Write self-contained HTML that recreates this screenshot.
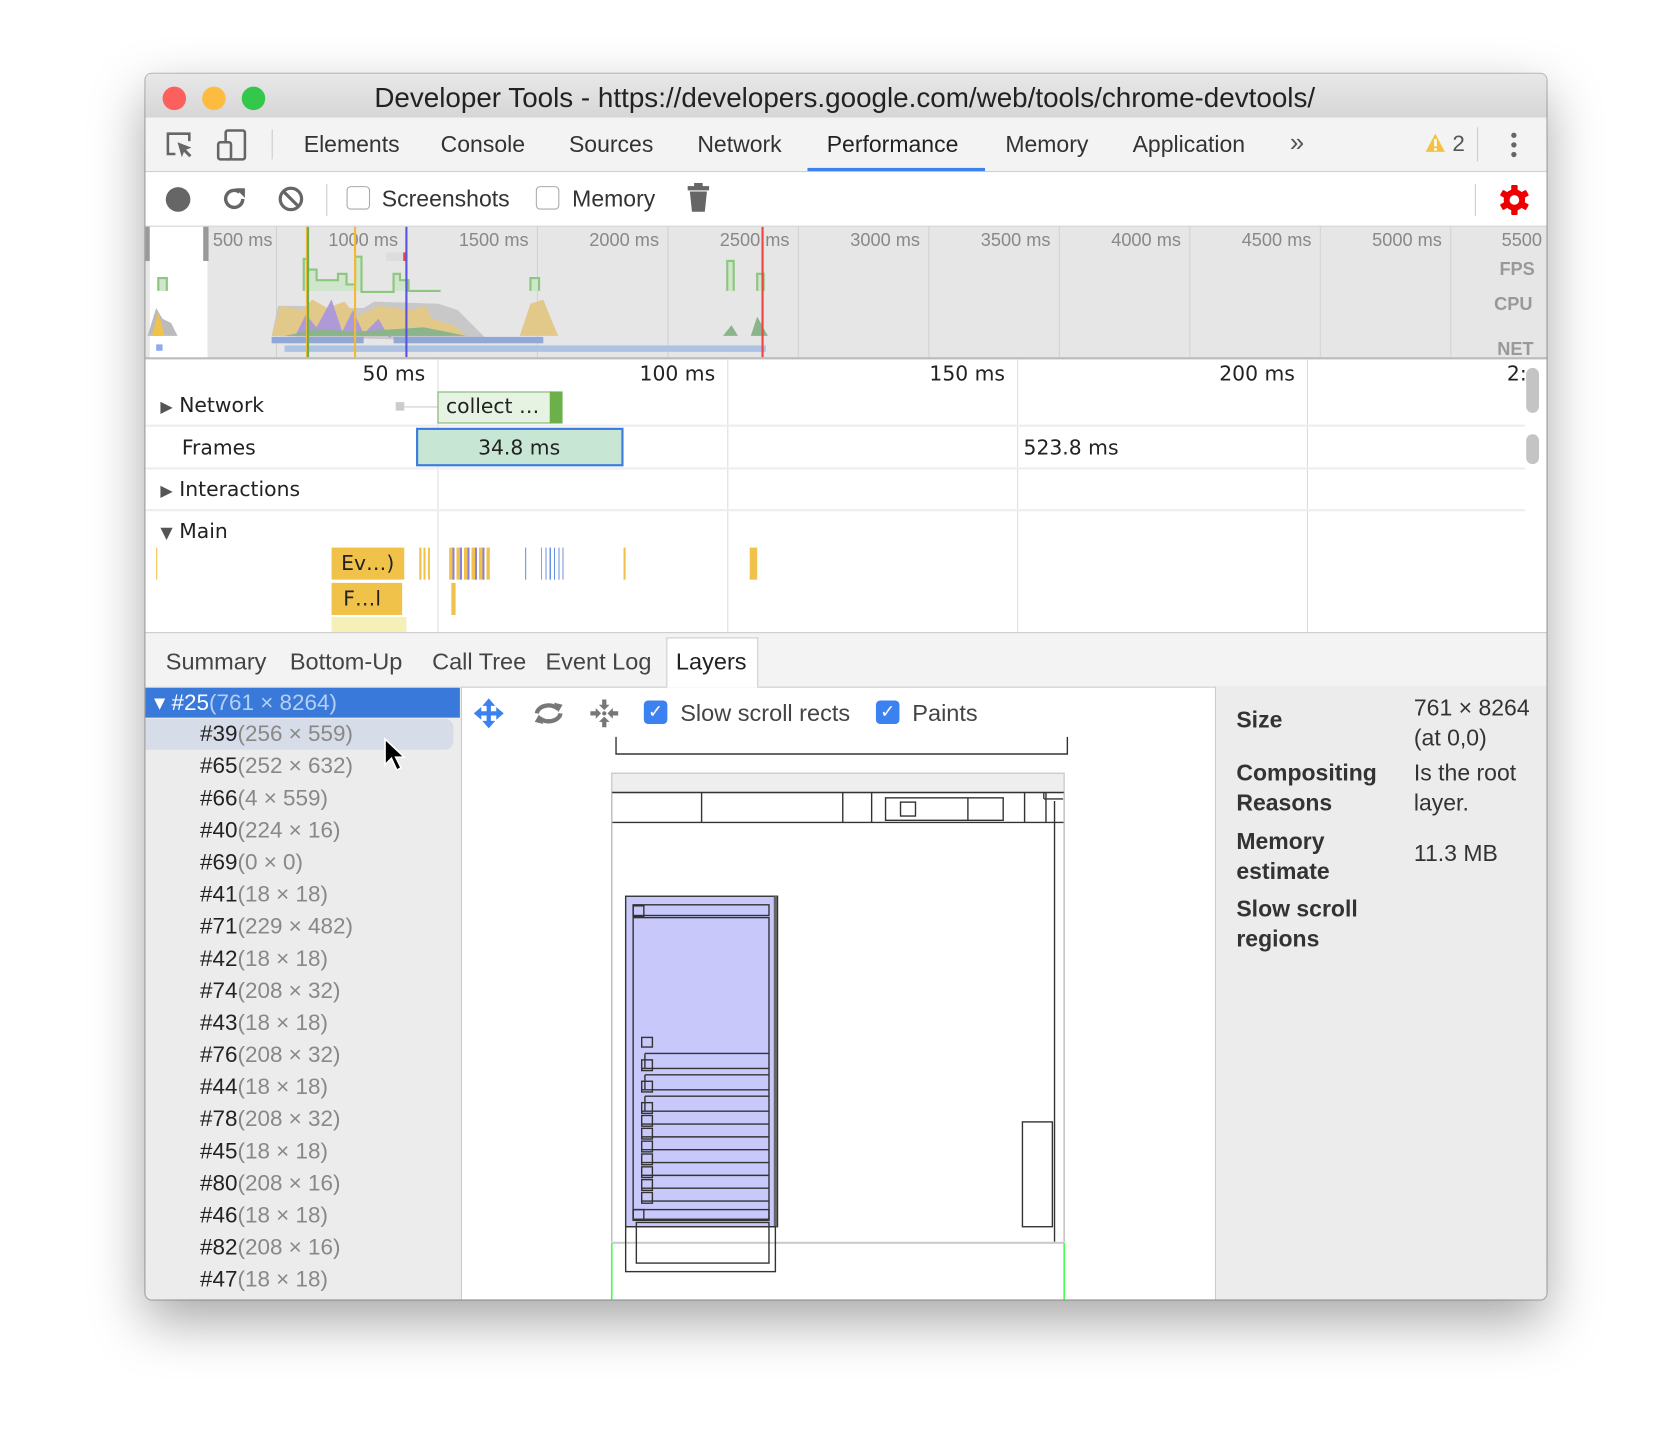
<!DOCTYPE html>
<html><head><meta charset="utf-8"><style>
html,body{margin:0;padding:0;background:#fff;width:1677px;height:1444px;overflow:hidden}
#s{position:absolute;left:0;top:0;width:1568px;height:1350px;transform:scale(1.0695);transform-origin:0 0;font-family:"Liberation Sans",Arial,sans-serif;color:#333}
.a{position:absolute}
.t{position:absolute;font-size:21px;color:#333;white-space:nowrap}
.g{color:#888}
.cb{position:absolute;width:20px;height:20px;border:1px solid #aaa;border-radius:4px;background:#fff}
.cbc{position:absolute;width:22px;height:22px;border-radius:4px;background:#3b82f0;color:#fff;font-size:17px;text-align:center;line-height:22px}
.ov{position:absolute;font-size:17px;color:#888}
.vl{position:absolute;width:1px;background:#ddd}
.row{position:absolute;left:187px;font-size:21px;color:#222}
</style></head><body><div id="s">
<div class="a" style="left:136px;top:69px;width:1310px;height:1146px;background:#fff;border-radius:6px;box-shadow:0 20px 50px rgba(0,0,0,.35),0 0 0 1px #b8b8b8;overflow:hidden">
<div class="a" style="left:0;top:0;width:1310px;height:41px;background:linear-gradient(#e8e8e8,#d6d6d6)"></div>
<div class="a" style="left:16px;top:12px;width:22px;height:22px;border-radius:50%;background:#fc605c"></div>
<div class="a" style="left:53px;top:12px;width:22px;height:22px;border-radius:50%;background:#fdbc40"></div>
<div class="a" style="left:90px;top:12px;width:22px;height:22px;border-radius:50%;background:#34c84a"></div>
<div class="t" style="left:214px;top:7px;font-size:26px;color:#222">Developer Tools - https://developers.google.com/web/tools/chrome-devtools/</div>
<div class="a" style="left:0;top:41px;width:1310px;height:50px;background:#f3f3f3;border-bottom:1px solid #ccc"></div>
<svg class="a" style="left:18px;top:53px" width="28" height="28" viewBox="0 0 28 28"><path d="M10 22H3V3h20v7" fill="none" stroke="#666" stroke-width="2.4"/><path d="M12 11l13 5-5 2 5 5-2 2-5-5-2 5z" fill="#666"/></svg>
<svg class="a" style="left:66px;top:51px" width="30" height="32" viewBox="0 0 30 32"><rect x="9" y="2" width="18" height="27" rx="2" fill="none" stroke="#666" stroke-width="2.4"/><rect x="2" y="13" width="12" height="16" rx="2" fill="#f3f3f3" stroke="#666" stroke-width="2.4"/></svg>
<div class="a" style="left:118px;top:52px;width:1px;height:28px;background:#ccc"></div>
<div class="t" style="left:148px;top:54px;font-size:21.5px">Elements</div>
<div class="t" style="left:276px;top:54px;font-size:21.5px">Console</div>
<div class="t" style="left:396px;top:54px;font-size:21.5px">Sources</div>
<div class="t" style="left:516px;top:54px;font-size:21.5px">Network</div>
<div class="t" style="left:637px;top:54px;font-size:21.5px;color:#222">Performance</div>
<div class="a" style="left:619px;top:88px;width:166px;height:3px;background:#3b82f0"></div>
<div class="t" style="left:804px;top:54px;font-size:21.5px">Memory</div>
<div class="t" style="left:923px;top:54px;font-size:21.5px">Application</div>
<div class="t" style="left:1070px;top:51px;font-size:24px;color:#555">»</div>
<svg class="a" style="left:1196px;top:55px" width="20" height="20" viewBox="0 0 20 20"><path d="M10 1L19 18H1z" fill="#f4c142"/><rect x="9" y="6" width="2.4" height="7" fill="#fff"/><rect x="9" y="14.5" width="2.4" height="2.4" fill="#fff"/></svg>
<div class="t" style="left:1222px;top:54px;color:#555">2</div>
<div class="a" style="left:1245px;top:50px;width:1px;height:32px;background:#ccc"></div>
<div class="a" style="left:1277px;top:55px;width:5px;height:5px;border-radius:50%;background:#666;box-shadow:0 9px 0 #666,0 18px 0 #666"></div>
<div class="a" style="left:0;top:92px;width:1310px;height:50px;background:#fff;border-bottom:1px solid #ccc"></div>
<div class="a" style="left:19px;top:106px;width:23px;height:23px;border-radius:50%;background:#666"></div>
<svg class="a" style="left:70px;top:104px" width="26" height="26" viewBox="0 0 26 26"><path d="M21 13a8 8 0 1 1-3-6.3" fill="none" stroke="#666" stroke-width="3.2"/><path d="M14 3h9v9z" fill="#666"/></svg>
<svg class="a" style="left:123px;top:104px" width="26" height="26" viewBox="0 0 26 26"><circle cx="13" cy="13" r="10" fill="none" stroke="#666" stroke-width="3"/><path d="M6 6l14 14" stroke="#666" stroke-width="3"/></svg>
<div class="a" style="left:169px;top:103px;width:1px;height:30px;background:#ccc"></div>
<div class="cb" style="left:188px;top:105px"></div>
<div class="t" style="left:221px;top:105px;font-size:21.5px">Screenshots</div>
<div class="cb" style="left:365px;top:105px"></div>
<div class="t" style="left:399px;top:105px;font-size:21.5px">Memory</div>
<svg class="a" style="left:506px;top:102px" width="22" height="28" viewBox="0 0 22 28"><rect x="1" y="3" width="20" height="4" fill="#666"/><rect x="7" y="0" width="8" height="4" fill="#666"/><path d="M3 8h16l-2 19H5z" fill="#666"/></svg>
<div class="a" style="left:1243px;top:103px;width:1px;height:30px;background:#ccc"></div>
<svg class="a" style="left:1265px;top:103px" width="30" height="30" viewBox="0 0 30 30"><g fill="#e00"><circle cx="15" cy="15" r="10"/><rect x="12" y="1" width="6" height="28" rx="1"/><rect x="12" y="1" width="6" height="28" rx="1" transform="rotate(60 15 15)"/><rect x="12" y="1" width="6" height="28" rx="1" transform="rotate(120 15 15)"/></g><circle cx="15" cy="15" r="4.5" fill="#fff"/></svg>
<div class="a" style="left:0;top:143px;width:1310px;height:122px;background:#e6e6e6;border-bottom:2px solid #bbb"></div>
<div class="a" style="left:4px;top:143px;width:54px;height:122px;background:#fff"></div>
<div class="a" style="left:0;top:143px;width:4px;height:32px;background:#999"></div>
<div class="a" style="left:54px;top:143px;width:5px;height:32px;background:#999"></div>
<div class="vl" style="left:122px;top:143px;height:122px;background:#d2d2d2"></div>
<div class="vl" style="left:244px;top:143px;height:122px;background:#d2d2d2"></div>
<div class="vl" style="left:366px;top:143px;height:122px;background:#d2d2d2"></div>
<div class="vl" style="left:488px;top:143px;height:122px;background:#d2d2d2"></div>
<div class="vl" style="left:610px;top:143px;height:122px;background:#d2d2d2"></div>
<div class="vl" style="left:732px;top:143px;height:122px;background:#d2d2d2"></div>
<div class="vl" style="left:854px;top:143px;height:122px;background:#d2d2d2"></div>
<div class="vl" style="left:976px;top:143px;height:122px;background:#d2d2d2"></div>
<div class="vl" style="left:1098px;top:143px;height:122px;background:#d2d2d2"></div>
<div class="vl" style="left:1220px;top:143px;height:122px;background:#d2d2d2"></div>
<div class="ov" style="left:63px;top:146px">500 ms</div>
<div class="ov" style="left:171px;top:146px">1000 ms</div>
<div class="ov" style="left:293px;top:146px">1500 ms</div>
<div class="ov" style="left:415px;top:146px">2000 ms</div>
<div class="ov" style="left:537px;top:146px">2500 ms</div>
<div class="ov" style="left:659px;top:146px">3000 ms</div>
<div class="ov" style="left:781px;top:146px">3500 ms</div>
<div class="ov" style="left:903px;top:146px">4000 ms</div>
<div class="ov" style="left:1025px;top:146px">4500 ms</div>
<div class="ov" style="left:1147px;top:146px">5000 ms</div>
<div class="ov" style="left:1268px;top:146px">5500</div>
<div class="ov" style="left:1266px;top:173px;font-weight:bold;color:#999">FPS</div>
<div class="ov" style="left:1261px;top:206px;font-weight:bold;color:#999">CPU</div>
<div class="ov" style="left:1264px;top:248px;font-weight:bold;color:#999">NET</div>
<svg class="a" style="left:0;top:143px" width="600" height="122" viewBox="0 0 600 122">
<path d="M12 60V48h8v12M148 60V30h4v10h8v10h8v0h12v-6h8v10h8V28h6v33h30V44h6v6h8v10h30v0M360 60V48h8v12M544 60V32h6v28M572 60V44h6v16" fill="#cfe6cc" stroke="#8cc67f" stroke-width="2"/>
<path d="M2 102L10 76l6 10 8 4 6 12z" fill="#bbb"/><path d="M6 102l6-22 6 22z" fill="#f0c24a"/>
<path d="M118 102l6-28h20l30 2h30l10-6 60 2 18 6 30 30z" fill="#c8c8c8"/>
<path d="M118 102l8-28 20 4 10-10 14 8 16-6 12 14 20-10 30 4 14-4 6 12 20 6 12 10z" fill="#e2c98a"/>
<path d="M140 102l10-20 10 12 14-26 10 30 10-20 10 22 14-14 10 18 10-8 14 6 20-4 10 4z" fill="#ae9ad8"/>
<path d="M130 102l30-6 40 2 60-4 40 8z" fill="#8ab58a"/>
<path d="M350 102l10-30 12-4 8 20 6 14z" fill="#e2c98a"/>
<path d="M540 102l8-10 6 10zM566 102l6-18 10 18z" fill="#8ab58a"/>
<rect x="118" y="103" width="86" height="6" fill="#8fa8d6"/><rect x="232" y="103" width="140" height="6" fill="#8fa8d6"/>
<rect x="130" y="111" width="450" height="6" fill="#aec2e4"/>
<rect x="10" y="110" width="6" height="6" fill="#8fa8f0"/>
<rect x="225" y="24" width="18" height="8" fill="#ddd"/><rect x="241" y="24" width="4" height="8" fill="#e44"/>
<rect x="151" y="0" width="2" height="122" fill="#6bb04a"/><rect x="150" y="0" width="1" height="122" fill="#f0b93a"/>
<rect x="195" y="0" width="2" height="122" fill="#f0b93a"/>
<rect x="243" y="0" width="2" height="122" fill="#5a55e0"/>
<rect x="576" y="0" width="2" height="122" fill="#e44"/>
</svg>
<div class="vl" style="left:273px;top:267px;height:255px;background:#ddd"></div>
<div class="vl" style="left:544px;top:267px;height:255px;background:#ddd"></div>
<div class="vl" style="left:815px;top:267px;height:255px;background:#ddd"></div>
<div class="vl" style="left:1086px;top:267px;height:255px;background:#ddd"></div>
<div class="t" style="left:203px;top:270px;font-family:'DejaVu Sans',sans-serif;font-size:19px;color:#222">50 ms</div>
<div class="t" style="left:462px;top:270px;font-family:'DejaVu Sans',sans-serif;font-size:19px;color:#222">100 ms</div>
<div class="t" style="left:733px;top:270px;font-family:'DejaVu Sans',sans-serif;font-size:19px;color:#222">150 ms</div>
<div class="t" style="left:1004px;top:270px;font-family:'DejaVu Sans',sans-serif;font-size:19px;color:#222">200 ms</div>
<div class="t" style="left:1273px;top:270px;font-family:'DejaVu Sans',sans-serif;font-size:19px;color:#222">2:</div>
<div class="a" style="left:0;top:328px;width:1290px;height:2px;background:#eee"></div>
<div class="a" style="left:0;top:368px;width:1290px;height:2px;background:#eee"></div>
<div class="a" style="left:0;top:407px;width:1290px;height:2px;background:#eee"></div>
<div class="a" style="left:1291px;top:275px;width:12px;height:42px;border-radius:6px;background:#c4c4c4"></div>
<div class="a" style="left:1291px;top:337px;width:12px;height:28px;border-radius:6px;background:#c4c4c4"></div>
<div class="t" style="left:14px;top:299px;font-family:'DejaVu Sans',sans-serif;font-size:19px;color:#222"><span style="font-size:15px;color:#555">▶</span> Network</div>
<div class="t" style="left:34px;top:339px;font-family:'DejaVu Sans',sans-serif;font-size:19px;color:#222">Frames</div>
<div class="t" style="left:14px;top:378px;font-family:'DejaVu Sans',sans-serif;font-size:19px;color:#222"><span style="font-size:15px;color:#555">▶</span> Interactions</div>
<div class="t" style="left:14px;top:417px;font-family:'DejaVu Sans',sans-serif;font-size:19px;color:#222"><span style="font-size:15px;color:#555">▼</span> Main</div>
<div class="a" style="left:234px;top:307px;width:8px;height:8px;background:#ccc"></div>
<div class="a" style="left:242px;top:311px;width:32px;height:1px;background:#ccc"></div>
<div class="a" style="left:273px;top:297px;width:106px;height:28px;background:#e6f2e2;border:1px solid #7cb36a"></div>
<div class="a" style="left:378px;top:297px;width:12px;height:30px;background:#6bb04a"></div>
<div class="t" style="left:281px;top:300px;font-family:'DejaVu Sans',sans-serif;font-size:19px;color:#222">collect …</div>
<div class="a" style="left:253px;top:331px;width:190px;height:32px;background:#c8e6d4;border:2px solid #3b7be0"></div>
<div class="t" style="left:311px;top:339px;font-family:'DejaVu Sans',sans-serif;font-size:19px;color:#222">34.8 ms</div>
<div class="t" style="left:821px;top:339px;font-family:'DejaVu Sans',sans-serif;font-size:19px;color:#222">523.8 ms</div>
<div class="a" style="left:174px;top:443px;width:68px;height:30px;background:#f0c24a"></div>
<div class="t" style="left:183px;top:447px;font-family:'DejaVu Sans',sans-serif;font-size:19px;color:#222">Ev…)</div>
<div class="a" style="left:174px;top:476px;width:66px;height:30px;background:#f0c24a"></div>
<div class="t" style="left:185px;top:480px;font-family:'DejaVu Sans',sans-serif;font-size:19px;color:#222">F…l</div>
<div class="a" style="left:174px;top:508px;width:70px;height:14px;background:#f4f0b8"></div>
<div class="a" style="left:10px;top:443px;width:1px;height:30px;background:#f0c24a"></div>
<div class="a" style="left:256px;top:443px;width:10px;height:30px;background:repeating-linear-gradient(90deg,#f0c24a 0 2px,#fff 2px 4px)"></div>
<div class="a" style="left:284px;top:443px;width:38px;height:30px;background:repeating-linear-gradient(90deg,#f0c24a 0 3px,#8a80e0 3px 5px,#fff 5px 7px)"></div>
<div class="a" style="left:370px;top:443px;width:22px;height:30px;background:repeating-linear-gradient(90deg,#6a90e0 0 1px,#fff 1px 4px)"></div>
<div class="a" style="left:355px;top:443px;width:1px;height:30px;background:#6a90e0"></div>
<div class="a" style="left:447px;top:443px;width:2px;height:30px;background:#f0c24a"></div>
<div class="a" style="left:565px;top:443px;width:7px;height:30px;background:#f0c24a"></div>
<div class="a" style="left:286px;top:476px;width:4px;height:30px;background:#f0c24a"></div>
<div class="a" style="left:0;top:522px;width:1310px;height:50px;background:#f3f3f3;border-top:1px solid #ccc;border-bottom:1px solid #ccc"></div>
<div class="t" style="left:19px;top:537px;color:#444;font-size:22px">Summary</div>
<div class="t" style="left:135px;top:537px;color:#444;font-size:22px">Bottom-Up</div>
<div class="t" style="left:268px;top:537px;color:#444;font-size:22px">Call Tree</div>
<div class="t" style="left:374px;top:537px;color:#444;font-size:22px">Event Log</div>
<div class="a" style="left:487px;top:527px;width:84px;height:46px;background:#fff;border:1px solid #ccc;border-bottom:none"></div>
<div class="t" style="left:496px;top:537px;color:#222;font-size:22px">Layers</div>
<div class="a" style="left:0;top:573px;width:295px;height:573px;background:#ececec;border-right:1px solid #ccc"></div>
<div class="a" style="left:0;top:574px;width:294px;height:28px;background:#3879d9"></div>
<div class="t" style="left:8px;top:576px;font-size:21px;color:#fff">▾ #25<span style="color:#b8cff4">(761 × 8264)</span></div>
<div class="a" style="left:0;top:603px;width:288px;height:29px;background:#d6dce8;border-radius:0 8px 8px 0"></div>
<div class="row a" style="left:51px;top:606px">#39<span class="g">(256 × 559)</span></div>
<div class="row a" style="left:51px;top:636px">#65<span class="g">(252 × 632)</span></div>
<div class="row a" style="left:51px;top:666px">#66<span class="g">(4 × 559)</span></div>
<div class="row a" style="left:51px;top:696px">#40<span class="g">(224 × 16)</span></div>
<div class="row a" style="left:51px;top:726px">#69<span class="g">(0 × 0)</span></div>
<div class="row a" style="left:51px;top:756px">#41<span class="g">(18 × 18)</span></div>
<div class="row a" style="left:51px;top:786px">#71<span class="g">(229 × 482)</span></div>
<div class="row a" style="left:51px;top:816px">#42<span class="g">(18 × 18)</span></div>
<div class="row a" style="left:51px;top:846px">#74<span class="g">(208 × 32)</span></div>
<div class="row a" style="left:51px;top:876px">#43<span class="g">(18 × 18)</span></div>
<div class="row a" style="left:51px;top:906px">#76<span class="g">(208 × 32)</span></div>
<div class="row a" style="left:51px;top:936px">#44<span class="g">(18 × 18)</span></div>
<div class="row a" style="left:51px;top:966px">#78<span class="g">(208 × 32)</span></div>
<div class="row a" style="left:51px;top:996px">#45<span class="g">(18 × 18)</span></div>
<div class="row a" style="left:51px;top:1026px">#80<span class="g">(208 × 16)</span></div>
<div class="row a" style="left:51px;top:1056px">#46<span class="g">(18 × 18)</span></div>
<div class="row a" style="left:51px;top:1086px">#82<span class="g">(208 × 16)</span></div>
<div class="row a" style="left:51px;top:1116px">#47<span class="g">(18 × 18)</span></div>
<svg class="a" style="left:222px;top:620px" width="22" height="34" viewBox="0 0 22 34"><path d="M2 2v24l6-6 5 11 4-2-5-10h8z" fill="#000" stroke="#fff" stroke-width="1.5"/></svg>
<div class="a" style="left:1000px;top:573px;width:310px;height:573px;background:#ececec;border-left:1px solid #ccc"></div>
<div class="t" style="left:1020px;top:592px;font-weight:bold;font-size:21.5px">Size</div>
<div class="t" style="left:1186px;top:579px;line-height:28px;font-size:21.5px">761 × 8264<br>(at 0,0)</div>
<div class="t" style="left:1020px;top:640px;font-weight:bold;line-height:28px;font-size:21.5px">Compositing<br>Reasons</div>
<div class="t" style="left:1186px;top:640px;line-height:28px;font-size:21.5px">Is the root<br>layer.</div>
<div class="t" style="left:1020px;top:704px;font-weight:bold;line-height:28px;font-size:21.5px">Memory<br>estimate</div>
<div class="t" style="left:1186px;top:717px;font-size:21.5px">11.3 MB</div>
<div class="t" style="left:1020px;top:767px;font-weight:bold;line-height:28px;font-size:21.5px">Slow scroll<br>regions</div>
<svg class="a" style="left:306px;top:583px" width="30" height="30" viewBox="0 0 30 30"><path d="M15 1l6 7h-4v5h5V9l7 6-7 6v-4h-5v5h4l-6 7-6-7h4v-5H8v4l-7-6 7-6v4h5V8H9z" fill="#3b82f0"/></svg>
<svg class="a" style="left:362px;top:584px" width="30" height="28" viewBox="0 0 30 28"><path d="M4 14a11 8 0 0 1 20-4M26 14a11 8 0 0 1-20 4" fill="none" stroke="#777" stroke-width="4"/><path d="M20 4l8 2-4 7zM10 24l-8-2 4-7z" fill="#777"/></svg>
<svg class="a" style="left:414px;top:583px" width="30" height="30" viewBox="0 0 30 30"><g fill="#777"><path d="M15 12l-5-5h3V2h4v5h3zM15 18l-5 5h3v5h4v-5h3zM12 15l-5-5v3H2v4h5v3zM18 15l5-5v3h5v4h-5v3z"/><circle cx="15" cy="15" r="2"/></g></svg>
<div class="cbc" style="left:466px;top:586px">✓</div>
<div class="t" style="left:500px;top:585px;color:#444;font-size:22px">Slow scroll rects</div>
<div class="cbc" style="left:683px;top:586px">✓</div>
<div class="t" style="left:717px;top:585px;color:#444;font-size:22px">Paints</div>
<svg class="a" style="left:296px;top:612px" width="703" height="534" viewBox="296 612 703 534">
<g fill="none" stroke="#333" stroke-width="1.3">
<path d="M440 620v16h422v-16"/>
<rect x="436" y="654" width="423" height="18" fill="#eee" stroke="#ccc"/>
<path d="M436 672h423"/>
<path d="M436 700h423M520 672v28M652 672v28M679 672v28M822 672v28M842 672v28"/>
<rect x="692" y="677" width="110" height="21"/><path d="M769 677v21"/><rect x="706" y="681" width="14" height="13"/>
<path d="M840 678h18M840 678v-6M850 680v412"/>
<path d="M436 672v420" stroke="#bbb"/><path d="M859 672v420" stroke="#bbb"/>
<path d="M436 1093h423" stroke="#ccc" stroke-width="2"/>
<rect x="449" y="769" width="142" height="309" fill="#c8c8fa" stroke="#333"/>
<path d="M589 769v309" stroke="#666" stroke-width="3"/>
<rect x="456" y="777" width="127" height="10"/><rect x="456" y="778" width="10" height="10"/>
<rect x="456" y="789" width="127" height="282"/>
<rect x="464" y="901" width="10" height="9"/>
<path d="M467 916h116M467 916v14M464 930h119M467 936h116M467 936v14M464 950h119M467 956h116M467 956v14M464 970h119M464 982h119M464 994h119M464 1006h119M464 1018h119M464 1030h119M464 1042h119M464 1054h119"/>
<rect x="464" y="922" width="10" height="10"/><rect x="464" y="942" width="10" height="10"/><rect x="464" y="962" width="10" height="10"/><rect x="464" y="974" width="10" height="10"/><rect x="464" y="986" width="10" height="10"/><rect x="464" y="998" width="10" height="10"/><rect x="464" y="1010" width="10" height="10"/><rect x="464" y="1022" width="10" height="10"/><rect x="464" y="1034" width="10" height="10"/><rect x="464" y="1046" width="10" height="10"/>
<rect x="456" y="1062" width="127" height="10"/><rect x="456" y="1062" width="10" height="10"/>
<rect x="449" y="1078" width="140" height="42"/><rect x="459" y="1074" width="124" height="38"/>
<rect x="820" y="980" width="28" height="98"/>
</g>
<path d="M436 1093v53M859 1093v53" stroke="#4f4" stroke-width="1.5"/>
</svg>
</div>
</div></body></html>
